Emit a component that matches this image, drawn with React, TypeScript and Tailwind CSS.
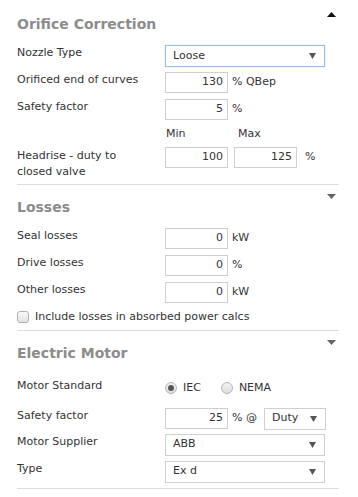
import React from 'react';

const font = { fontFamily: '"DejaVu Sans", Verdana, sans-serif' };

function Caret({ up = false, dark = false }: { up?: boolean; dark?: boolean }) {
  return (
    <svg width="9" height="5" viewBox="0 0 9 5" className="block">
      {up ? (
        <path d="M0 5 L4.5 0 L9 5 Z" fill={dark ? '#111' : '#666'} />
      ) : (
        <path d="M0 0 L9 0 L4.5 5 Z" fill={dark ? '#111' : '#666'} />
      )}
    </svg>
  );
}

function SelectBox({ value, width = 'w-[160px]', focused = false }: { value: string; width?: string; focused?: boolean }) {
  return (
    <div
      className={`${width} h-[22px] flex items-center justify-between pl-[7px] pr-[8px] bg-white border ${
        focused ? 'border-[#9dbde6] shadow-[0_0_1px_#9dbde6]' : 'border-[#cfcfcf]'
      }`}
    >
      <span className="text-[11px] text-[#333]">{value}</span>
      <svg width="7" height="6" viewBox="0 0 7 6">
        <path d="M0 0 L7 0 L3.5 6 Z" fill="#555" />
      </svg>
    </div>
  );
}

function NumInput({ value }: { value: string }) {
  return (
    <div className="w-[63px] h-[21px] border border-[#cfcfcf] bg-white flex items-center justify-end pr-[4px] text-[11px] text-[#333]">
      {value}
    </div>
  );
}

function Row({ label, children, className = '' }: { label: React.ReactNode; children: React.ReactNode; className?: string }) {
  return (
    <div className={`flex items-start ${className}`}>
      <div className="w-[148px] text-[11px] leading-[16px] text-[#333]">{label}</div>
      <div className="flex items-center gap-[4px] text-[11px] text-[#333]">{children}</div>
    </div>
  );
}

function Section({
  title,
  up = false,
  children,
  top,
}: {
  title: string;
  up?: boolean;
  children: React.ReactNode;
  top: string;
}) {
  return (
    <section className={`relative border-b border-[#dedede] ${top}`}>
      <div className={`absolute right-[3px] ${up ? 'top-[12px]' : 'top-[9px]'}`}>
        <Caret up={up} dark={up} />
      </div>
      <h2 className="text-[14px] leading-[18px] font-bold text-[#8c8c8c]">{title}</h2>
      {children}
    </section>
  );
}

function Radio({ checked }: { checked?: boolean }) {
  return (
    <span className="w-[12px] h-[12px] rounded-full border border-[#b5b5b5] bg-gradient-to-b from-[#f4f4f4] to-[#dcdcdc] flex items-center justify-center">
      {checked && <span className="w-[6px] h-[6px] rounded-full bg-[#555]" />}
    </span>
  );
}

export default function App() {
  return (
    <div className="w-[358px] h-[497px] bg-white pl-[17px] pr-[19px]" style={font}>
      {/* Orifice Correction */}
      <Section title="Orifice Correction" up top="pt-[15px]">
        <Row label="Nozzle Type" className="mt-[12px]">
          <SelectBox value="Loose" focused />
        </Row>
        <Row label="Orificed end of curves" className="mt-[5px]">
          <NumInput value="130" />
          <span>% QBep</span>
        </Row>
        <Row label="Safety factor" className="mt-[6px]">
          <NumInput value="5" />
          <span>%</span>
        </Row>
        <div className="flex mt-[6px] text-[11px] leading-[16px] text-[#333]">
          <div className="w-[148px]" />
          <div className="w-[69px] pl-[1px]">Min</div>
          <div className="pl-[4px]">Max</div>
        </div>
        <div className="flex items-start mt-[5px] pb-[4px]">
          <div className="w-[148px] text-[11px] leading-[16px] text-[#333] pt-[1px]">
            Headrise - duty to
            <br />
            closed valve
          </div>
          <div className="flex items-center gap-[6px] text-[11px] text-[#333]">
            <NumInput value="100" />
            <NumInput value="125" />
            <span className="ml-[2px]">%</span>
          </div>
        </div>
      </Section>

      {/* Losses */}
      <Section title="Losses" top="pt-[13px]">
        <Row label="Seal losses" className="mt-[12px]">
          <NumInput value="0" />
          <span>kW</span>
        </Row>
        <Row label="Drive losses" className="mt-[6px]">
          <NumInput value="0" />
          <span>%</span>
        </Row>
        <Row label="Other losses" className="mt-[6px]">
          <NumInput value="0" />
          <span>kW</span>
        </Row>
        <label className="flex items-center gap-[6px] mt-[6px] pb-[5px] text-[11px] leading-[16px] text-[#333]">
          <span className="w-[12px] h-[12px] rounded-[3px] border border-[#b0b0b0] bg-gradient-to-b from-[#fafafa] to-[#e2e2e2]" />
          Include losses in absorbed power calcs
        </label>
      </Section>

      {/* Electric Motor */}
      <Section title="Electric Motor" top="pt-[13px]">
        <Row label="Motor Standard" className="mt-[16px]">
          <span className="flex items-center gap-[6px] mt-[2px]">
            <Radio checked />
            <span>IEC</span>
          </span>
          <span className="flex items-center gap-[6px] ml-[16px] mt-[2px]">
            <Radio />
            <span>NEMA</span>
          </span>
        </Row>
        <Row label="Safety factor" className="mt-[11px]">
          <NumInput value="25" />
          <span>% @</span>
          <SelectBox value="Duty" width="w-[62px] ml-[3px]" />
        </Row>
        <Row label="Motor Supplier" className="mt-[4px]">
          <SelectBox value="ABB" />
        </Row>
        <Row label="Type" className="mt-[5px] pb-[5px]">
          <SelectBox value="Ex d" />
        </Row>
      </Section>
    </div>
  );
}
